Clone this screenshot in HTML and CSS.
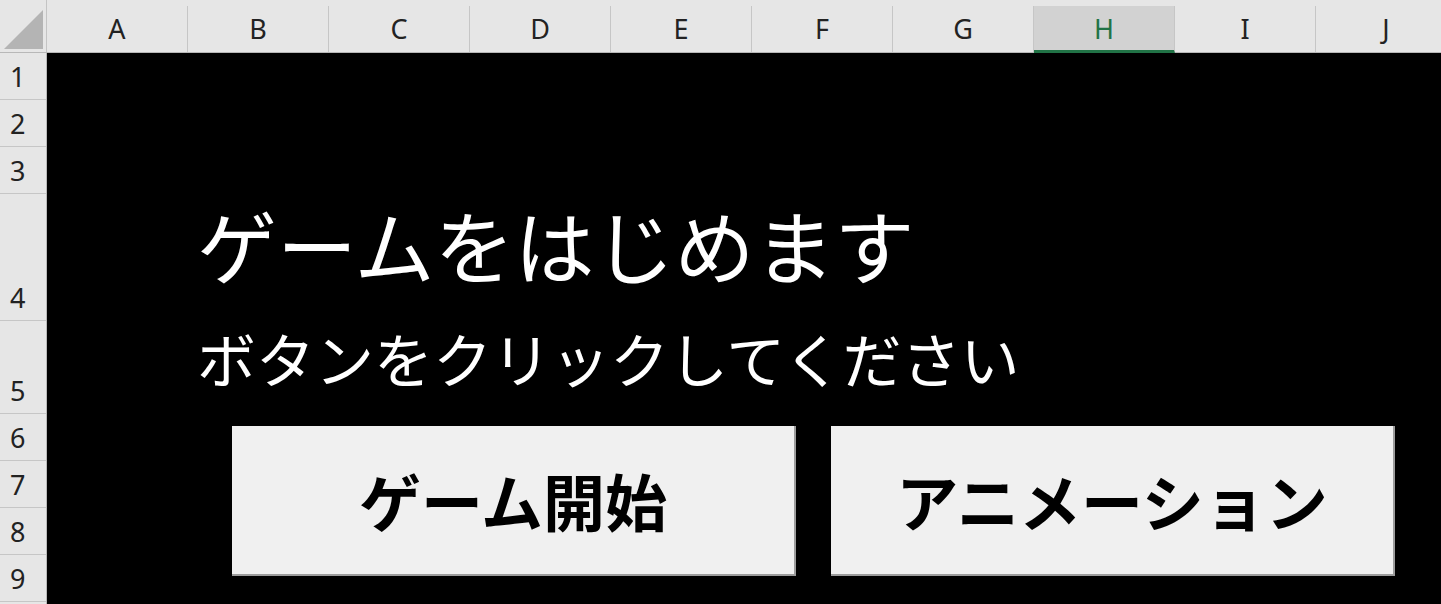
FILE: index.html
```html
<!DOCTYPE html>
<html lang="ja">
<head>
    <meta charset="UTF-8">
    <title>ゲーム</title>
    <link rel="stylesheet" href="styles.css">
</head>
<body>
    <div class="sheet">
        <div class="col-headers">
            <div class="corner"><div class="corner-tri"></div></div>
            <div class="col">A</div>
            <div class="col">B</div>
            <div class="col">C</div>
            <div class="col">D</div>
            <div class="col">E</div>
            <div class="col">F</div>
            <div class="col">G</div>
            <div class="col selected">H</div>
            <div class="col">I</div>
            <div class="col">J</div>
        </div>
        <div class="sheet-body">
            <div class="row-headers">
                <div class="row">1</div>
                <div class="row">2</div>
                <div class="row">3</div>
                <div class="row tall">4</div>
                <div class="row mid">5</div>
                <div class="row">6</div>
                <div class="row">7</div>
                <div class="row">8</div>
                <div class="row">9</div>
                <div class="row"></div>
            </div>
            <div class="canvas">
                <div class="title">ゲームをはじめます</div>
                <div class="subtitle">ボタンをクリックしてください</div>
                <div class="buttons">
                    <button class="sheet-btn" onclick="startGame()">ゲーム開始</button>
                    <button class="sheet-btn" onclick="playAnimation()">アニメーション</button>
                </div>
            </div>
        </div>
    </div>

    <script>
        function startGame() {
            document.querySelector('.title').textContent = 'スタート!';
        }

        function playAnimation() {
            document.querySelector('.subtitle').textContent = 'アニメーション中...';
        }
    </script>
</body>
</html>
```

FILE: styles.css
```css
body {
    margin: 0;
    font-family: "Noto Sans", "Noto Sans CJK JP", sans-serif;
    background-color: #000;
    overflow: hidden;
}

.sheet {
    width: 1441px;
    height: 604px;
    display: flex;
    flex-direction: column;
    overflow: hidden;
}

/* column header strip */
.col-headers {
    display: flex;
    height: 53px;
    padding-top: 6px;
    box-sizing: border-box;
    background-color: #e6e6e6;
    border-bottom: 1px solid #b8b8b8;
    flex-shrink: 0;
}
.corner {
    width: 47px;
    flex-shrink: 0;
    box-sizing: border-box;
    border-right: 1px solid #c4c4c4;
    margin-top: -6px;
    position: relative;
}
.corner-tri {
    position: absolute;
    left: 4px;
    top: 10px;
    width: 0;
    height: 0;
    border-left: 39px solid transparent;
    border-bottom: 39px solid #b4b4b4;
}
.col {
    width: 141px;
    flex-shrink: 0;
    box-sizing: border-box;
    border-right: 1px solid #c6c6c6;
    display: flex;
    align-items: center;
    justify-content: center;
    font-size: 27px;
    color: #222;
    padding-bottom: 2px;
}
.col.selected {
    background-color: #d2d2d2;
    color: #217346;
    border-bottom: 3px solid #217346;
    padding-bottom: 0;
    margin-bottom: -1px;
}

.sheet-body {
    display: flex;
    flex: 1;
}

/* row numbers on the left */
.row-headers {
    width: 47px;
    flex-shrink: 0;
    box-sizing: border-box;
    background-color: #e6e6e6;
    border-right: 1px solid #b8b8b8;
}
.row {
    height: 47px;
    box-sizing: border-box;
    border-bottom: 1px solid #c6c6c6;
    display: flex;
    align-items: flex-end;
    padding: 0 0 9px 10px;
    font-size: 27px;
    line-height: 1;
    color: #222;
}
.row.tall {
    height: 127px;
}
.row.mid {
    height: 93px;
}

/* black cells area */
.canvas {
    flex: 1;
    background-color: #000;
    padding-left: 150px;
}
.title {
    font-family: "Noto Sans CJK JP", sans-serif;
    color: #fff;
    font-size: 80px;
    line-height: 1;
    margin-top: 150px;
    white-space: nowrap;
}
.subtitle {
    font-family: "Noto Sans CJK JP", sans-serif;
    color: #fff;
    font-size: 59px;
    line-height: 1;
    margin-top: 45px;
    white-space: nowrap;
}
.buttons {
    display: flex;
    gap: 35px;
    margin-top: 39px;
    margin-left: 35px;
}
.sheet-btn {
    width: 564px;
    height: 150px;
    background-color: #f0f0f0;
    border: none;
    border-right: 2px solid #9c9c9c;
    border-bottom: 2px solid #9c9c9c;
    font-family: "Noto Sans CJK JP", sans-serif;
    font-weight: bold;
    font-size: 62px;
    color: #000;
    cursor: pointer;
    padding: 0;
}
```
